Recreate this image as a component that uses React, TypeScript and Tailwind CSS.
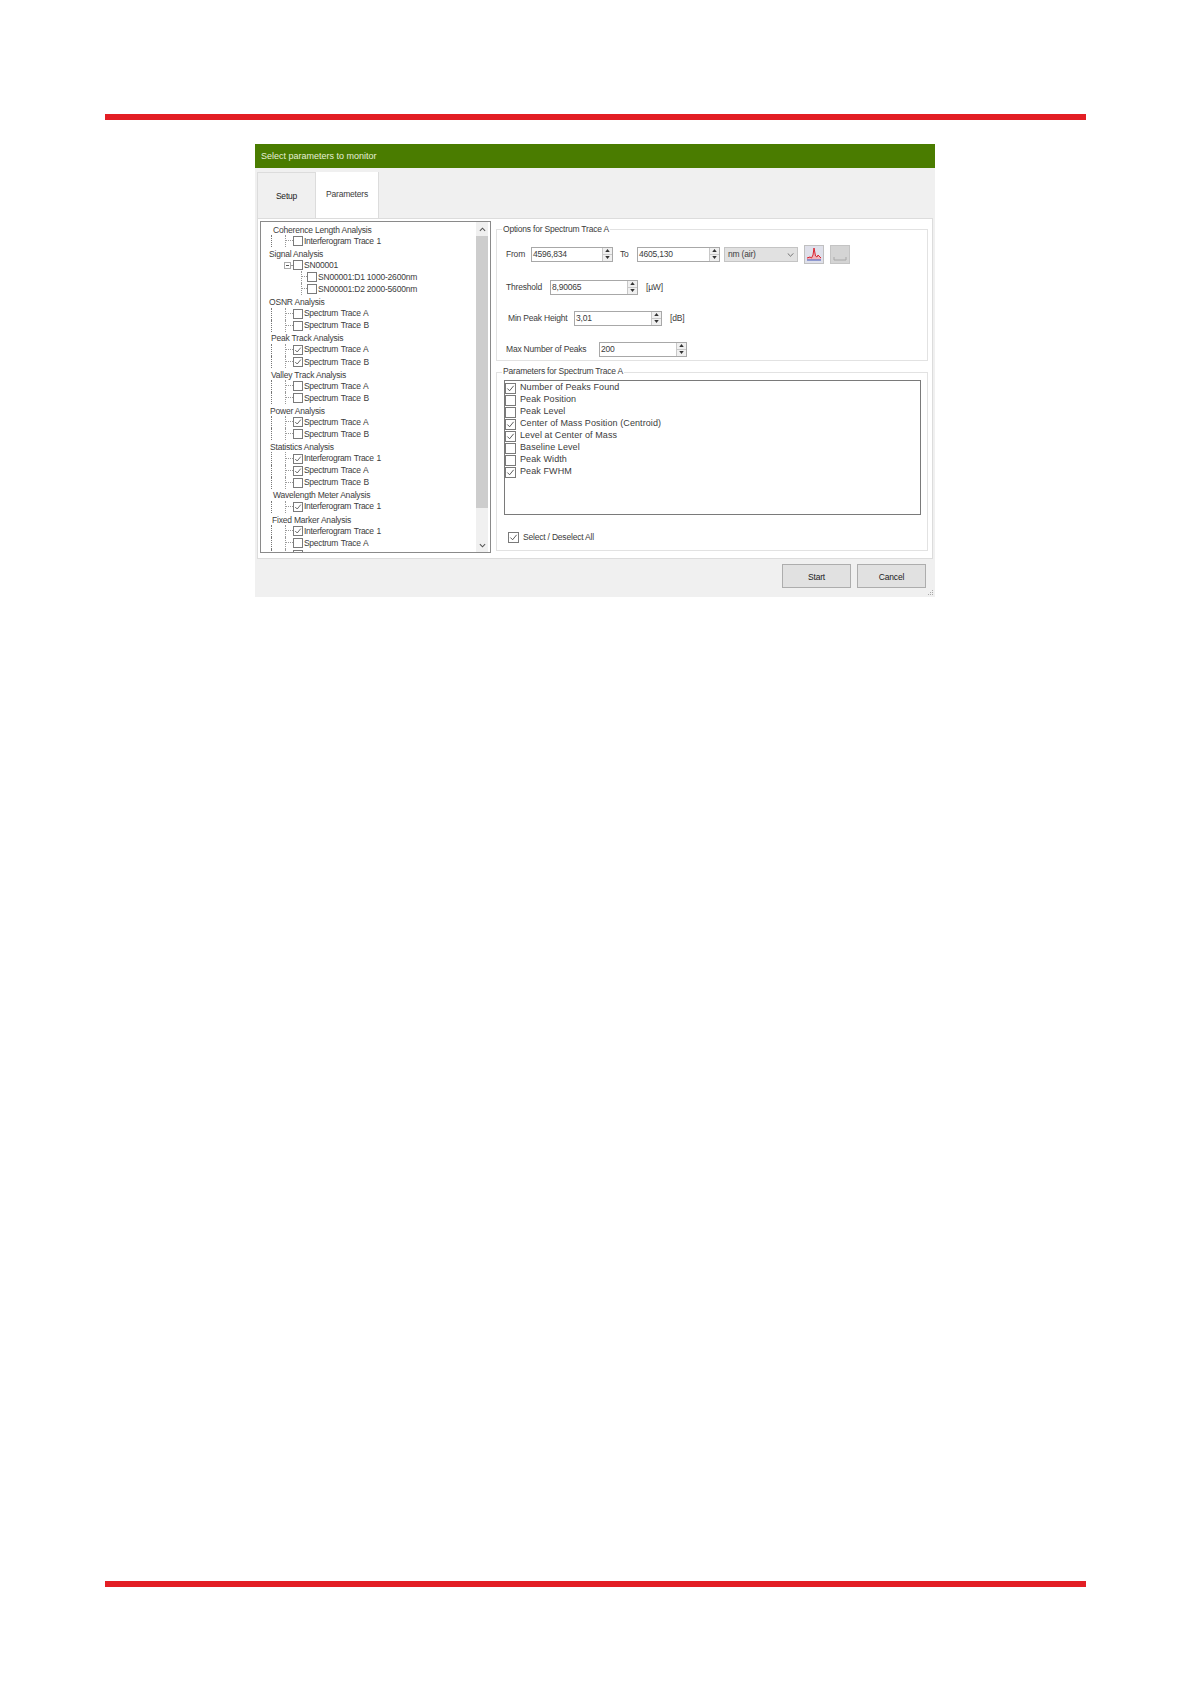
import React from "react";

type TreeChild = { label: string; checked?: boolean };
type TreeGroup = { title: string; offset: string; children: TreeChild[] };

const spectrumAB = (a = false, b = false): TreeChild[] => [
  { label: "Spectrum Trace A", checked: a },
  { label: "Spectrum Trace B", checked: b },
];

const groups: TreeGroup[] = [
  { title: "Coherence Length Analysis", offset: "pl-[12px]", children: [{ label: "Interferogram Trace 1" }] },
  { title: "OSNR Analysis", offset: "pl-[8px]", children: spectrumAB() },
  { title: "Peak Track Analysis", offset: "pl-[10px]", children: spectrumAB(true, true) },
  { title: "Valley Track Analysis", offset: "pl-[10px]", children: spectrumAB() },
  { title: "Power Analysis", offset: "pl-[9px]", children: spectrumAB(true, false) },
  {
    title: "Statistics Analysis",
    offset: "pl-[9px]",
    children: [{ label: "Interferogram Trace 1", checked: true }, ...spectrumAB(true, false)],
  },
  { title: "Wavelength Meter Analysis", offset: "pl-[12px]", children: [{ label: "Interferogram Trace 1", checked: true }] },
  {
    title: "Fixed Marker Analysis",
    offset: "pl-[11px]",
    children: [{ label: "Interferogram Trace 1", checked: true }, ...spectrumAB()],
  },
];

const params: TreeChild[] = [
  { label: "Number of Peaks Found", checked: true },
  { label: "Peak Position" },
  { label: "Peak Level" },
  { label: "Center of Mass Position (Centroid)", checked: true },
  { label: "Level at Center of Mass", checked: true },
  { label: "Baseline Level" },
  { label: "Peak Width" },
  { label: "Peak FWHM", checked: true },
];

const Check = ({ checked, size = "w-[10px] h-[10px]" }: { checked?: boolean; size?: string }) => (
  <div className={`${size} shrink-0 border border-[#7a7a7a] bg-white flex items-center justify-center`}>
    {checked && (
      <svg viewBox="0 0 10 10" className="w-full h-full">
        <polyline points="1.5,5 4,7.5 8.5,2" fill="none" stroke="#4a4a4a" strokeWidth="1" />
      </svg>
    )}
  </div>
);

const TreeRow = ({ children, className = "" }: { children: React.ReactNode; className?: string }) => (
  <div className={`h-[12.08px] flex items-center shrink-0 whitespace-nowrap ${className}`}>{children}</div>
);

const Connector = ({ width = "w-[8px]" }: { width?: string }) => (
  <div className={`${width} self-stretch shrink-0 border-l border-dotted border-[#999]`}>
    <div className="h-1/2 border-b border-dotted border-[#999]" />
  </div>
);

const ChildRow = ({ item }: { item: TreeChild }) => (
  <TreeRow>
    <div className="w-[10px] shrink-0" />
    <div className="self-stretch w-[14px] shrink-0 border-l border-dotted border-[#777]" />
    <Connector />
    <Check checked={item.checked} />
    <span className="ml-[1px] tracking-[-0.3px] [word-spacing:0.8px]">{item.label}</span>
  </TreeRow>
);

const Group = ({ group }: { group: TreeGroup }) => (
  <>
    <TreeRow className={`${group.offset} pt-[2px]`}>{group.title}</TreeRow>
    {group.children.map((c, i) => (
      <ChildRow key={i} item={c} />
    ))}
  </>
);

const SignalGroup = () => (
  <>
    <TreeRow className="pl-[8px] pt-[2px]">Signal Analysis</TreeRow>
    <TreeRow>
      <div className="w-[23px] shrink-0" />
      <div className="w-[7px] h-[7px] shrink-0 border border-[#aaa] bg-white flex items-center justify-center">
        <div className="w-[3px] h-px bg-[#555]" />
      </div>
      <div className="w-[2px] shrink-0 border-t border-dotted border-[#999]" />
      <Check />
      <span className="ml-[1px]">SN00001</span>
    </TreeRow>
    {["SN00001:D1 1000-2600nm", "SN00001:D2 2000-5600nm"].map((label) => (
      <TreeRow key={label}>
        <div className="w-[40px] shrink-0" />
        <Connector width="w-[6px]" />
        <Check />
        <span className="ml-[1px]">{label}</span>
      </TreeRow>
    ))}
  </>
);

const Spin = ({ value, width }: { value: string; width: string }) => (
  <div className={`${width} h-[15px] shrink-0 border border-[#a8a8a8] bg-white flex items-center justify-between`}>
    <span className="pl-[1px]">{value}</span>
    <div className="w-[10px] h-full shrink-0 bg-[#f0f0f0] border-l border-[#c8c8c8] flex flex-col">
      <div className="h-1/2 flex items-center justify-center border-b border-[#c8c8c8]">
        <svg viewBox="0 0 6 4" className="w-[5px] h-[3px]">
          <polygon points="3,0 6,4 0,4" fill="#333" />
        </svg>
      </div>
      <div className="h-1/2 flex items-center justify-center">
        <svg viewBox="0 0 6 4" className="w-[5px] h-[3px]">
          <polygon points="0,0 6,0 3,4" fill="#333" />
        </svg>
      </div>
    </div>
  </div>
);

const Legend = ({ children, top = "-mt-[8px]" }: { children: React.ReactNode; top?: string }) => (
  <div className={`ml-[5px] ${top} w-fit h-[13px] leading-[13px] bg-white px-[1px] whitespace-nowrap`}>{children}</div>
);

const App: React.FC = () => {
  return (
    <div className="w-[1191px] h-[1684px] bg-white flex flex-col font-['Liberation_Sans',sans-serif] text-[8.5px] tracking-[-0.2px] text-[#3c3c3c]">
      <div className="mt-[114px] ml-[105px] w-[981px] h-[6px] bg-[#e31e24] shrink-0" />

      <div className="mt-[24px] ml-[255px] w-[680px] h-[453px] bg-[#f0f0f0] flex flex-col shrink-0">
        <div className="h-[24px] bg-[#4a7c00] text-[#e6f0d8] text-[9px] tracking-normal flex items-center pl-[6px] pt-[2px] shrink-0">
          Select parameters to monitor
        </div>

        <div className="h-[50px] pt-[4px] pl-[2px] flex shrink-0">
          <div className="w-[59px] border border-b-0 border-[#dcdcdc] flex items-center justify-center text-[#222] pt-[2px]">
            Setup
          </div>
          <div className="w-[63px] bg-white border-r border-[#dcdcdc] flex items-center justify-center -mb-px pb-[2px]">
            Parameters
          </div>
        </div>

        <div className="ml-[2px] w-[676px] h-[341px] bg-white border border-[#dcdcdc] flex pl-[2px] pt-[2px] shrink-0">
          {/* tree */}
          <div className="w-[231px] h-[332px] border border-[#8a8a8a] flex shrink-0 overflow-hidden">
            <div className="flex-1 min-w-0 pt-[1px] flex flex-col overflow-hidden">
              <Group group={groups[0]} />
              <SignalGroup />
              {groups.slice(1).map((g) => (
                <Group key={g.title} group={g} />
              ))}
            </div>
            <div className="w-[12px] mr-[2px] bg-[#f0f0f0] flex flex-col shrink-0">
              <div className="h-[14px] flex items-center justify-center">
                <svg viewBox="0 0 8 5" className="w-[7px] h-[5px]">
                  <polyline points="1,4 4,1 7,4" fill="none" stroke="#555" strokeWidth="1.2" />
                </svg>
              </div>
              <div className="h-[272px] bg-[#cdcdcd]" />
              <div className="flex-1" />
              <div className="h-[14px] flex items-center justify-center">
                <svg viewBox="0 0 8 5" className="w-[7px] h-[5px]">
                  <polyline points="1,1 4,4 7,1" fill="none" stroke="#555" strokeWidth="1.2" />
                </svg>
              </div>
            </div>
          </div>

          <div className="ml-[5px] w-[432px] pt-[8px] flex flex-col shrink-0">
            {/* options */}
            <div className="h-[132px] border border-[#e2e2e2] shrink-0">
              <Legend top="-mt-[7px]">Options for Spectrum Trace A</Legend>
              <div className="mt-[11px] ml-[9px] flex items-center h-[15px]">
                <span className="w-[25px] shrink-0">From</span>
                <Spin value="4596,834" width="w-[82px]" />
                <span className="ml-[7px] w-[17px] shrink-0">To</span>
                <Spin value="4605,130" width="w-[83px]" />
                <div className="ml-[4px] w-[74px] h-[15px] bg-[#e1e1e1] border border-[#c4c4c4] flex items-center justify-between px-[3px] shrink-0">
                  <span>nm (air)</span>
                  <svg viewBox="0 0 8 5" className="w-[7px] h-[4px]">
                    <polyline points="0.5,0.5 4,4 7.5,0.5" fill="none" stroke="#555" strokeWidth="1" />
                  </svg>
                </div>
                <div className="ml-[6px] w-[20px] h-[19px] bg-[#dfe0ea] border border-[#c0c0c0] shrink-0">
                  <svg viewBox="0 0 18 17" className="w-full h-full">
                    <path d="M2 12 L5 11 L6.5 12 L8 9 L9 2 L10.5 10 L12 11 L13 9 L15 11 L16 12 L16 14 L2 14 Z" fill="#f0b4bc" />
                    <polyline points="2,12 5,11 6.5,12 8,9 9,2 10.5,10 12,11 13,9 15,11 16,12" fill="none" stroke="#d8222e" strokeWidth="1" />
                    <line x1="2" y1="14" x2="16" y2="14" stroke="#5a6cc0" strokeWidth="1.2" />
                  </svg>
                </div>
                <div className="ml-[6px] w-[20px] h-[19px] bg-[#d4d4d4] border border-[#c4c4c4] shrink-0">
                  <svg viewBox="0 0 18 17" className="w-full h-full">
                    <path d="M3 11 V14 H15 V11" fill="none" stroke="#a8a8a8" strokeWidth="1" />
                  </svg>
                </div>
              </div>
              <div className="mt-[18px] ml-[9px] flex items-center h-[15px]">
                <span className="w-[44px] shrink-0">Threshold</span>
                <Spin value="8,90065" width="w-[88px]" />
                <span className="ml-[8px]">[µW]</span>
              </div>
              <div className="mt-[16px] ml-[11px] flex items-center h-[15px]">
                <span className="w-[66px] shrink-0">Min Peak Height</span>
                <Spin value="3,01" width="w-[88px]" />
                <span className="ml-[8px]">[dB]</span>
              </div>
              <div className="mt-[16px] ml-[9px] flex items-center h-[15px]">
                <span className="w-[93px] shrink-0">Max Number of Peaks</span>
                <Spin value="200" width="w-[88px]" />
              </div>
            </div>

            {/* parameters */}
            <div className="mt-[11px] h-[179px] border border-[#e2e2e2] shrink-0">
              <Legend>Parameters for Spectrum Trace A</Legend>
              <div className="ml-[7px] mt-[2px] w-[417px] h-[135px] border border-[#7a7a7a] pt-[1px] flex flex-col">
                {params.map((p) => (
                  <div key={p.label} className="h-[12px] flex items-center shrink-0 whitespace-nowrap">
                    <Check checked={p.checked} size="w-[11px] h-[11px]" />
                    <span className="ml-[4px] text-[9px] tracking-[0.01em]">{p.label}</span>
                  </div>
                ))}
              </div>
              <div className="mt-[16px] ml-[11px] flex items-center">
                <Check checked size="w-[11px] h-[11px]" />
                <span className="ml-[4px]">Select / Deselect All</span>
              </div>
            </div>
          </div>
        </div>

        <div className="flex-1 flex justify-end items-start pt-[5px] pr-[9px] relative">
          <div className="w-[69px] h-[24px] bg-[#e1e1e1] border border-[#adadad] flex items-center justify-center text-[#222] pt-[2px]">
            Start
          </div>
          <div className="ml-[6px] w-[69px] h-[24px] bg-[#e1e1e1] border border-[#adadad] flex items-center justify-center text-[#222] pt-[2px]">
            Cancel
          </div>
          {/* resize grip */}
          <svg viewBox="0 0 6 6" className="absolute right-[1px] bottom-[1px] w-[6px] h-[6px]">
            <rect x="4" y="0" width="1" height="1" fill="#aaa" />
            <rect x="2" y="2" width="1" height="1" fill="#aaa" />
            <rect x="4" y="2" width="1" height="1" fill="#aaa" />
            <rect x="0" y="4" width="1" height="1" fill="#aaa" />
            <rect x="2" y="4" width="1" height="1" fill="#aaa" />
            <rect x="4" y="4" width="1" height="1" fill="#aaa" />
          </svg>
        </div>
      </div>

      <div className="mt-auto mb-[97px] ml-[105px] w-[981px] h-[6px] bg-[#e31e24] shrink-0" />
    </div>
  );
};

export default App;
